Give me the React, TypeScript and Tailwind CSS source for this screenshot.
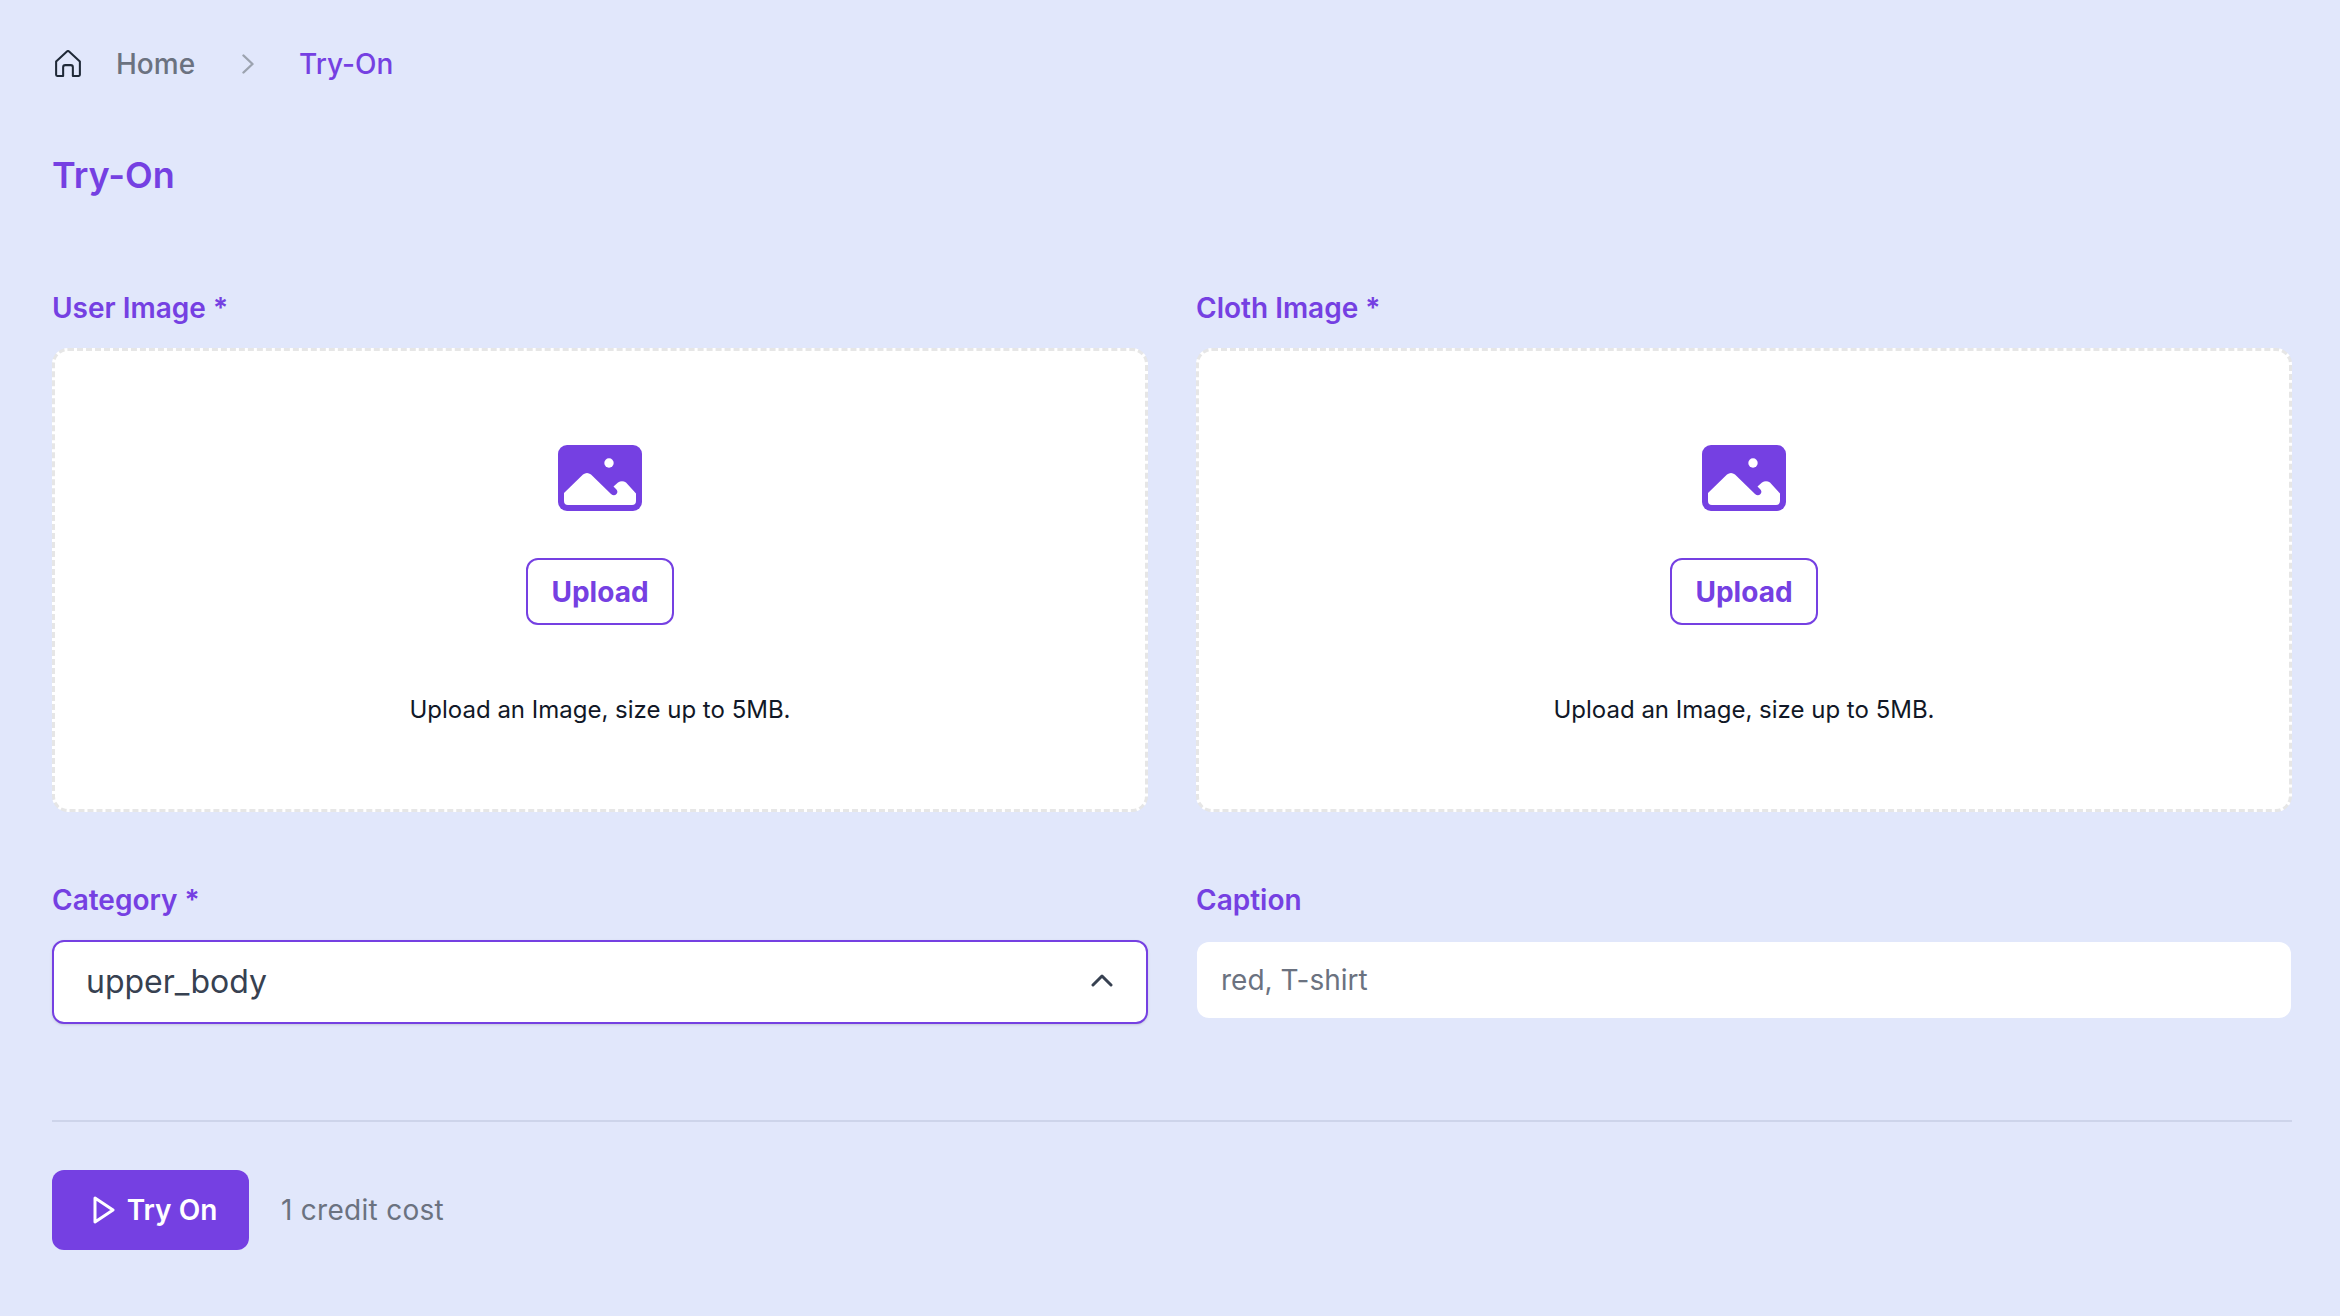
const labelClass = "text-[28px] leading-[40px] font-semibold text-[#7540e2]";

function HomeIcon() {
  return (
    <svg viewBox="0 0 24 25" className="w-[26px] h-[27px] text-[#1f2937]" fill="none" stroke="currentColor" strokeWidth="1.9" strokeLinejoin="round" strokeLinecap="round">
      <path d="M1 10.6 11 1.4a1.5 1.5 0 0 1 2 0l10 9.2V23a1 1 0 0 1-1 1h-5.5v-8a2 2 0 0 0-2-2h-5a2 2 0 0 0-2 2v8H2a1 1 0 0 1-1-1Z" />
    </svg>
  );
}

function ImageIcon() {
  return (
    <svg viewBox="0 0 84 66" className="w-[84px] h-[66px]">
      <rect width="84" height="66" rx="9" fill="#7540e2" />
      <circle cx="51" cy="18" r="4.7" fill="#fff" />
      <path
        d="M6 48 25 29.5Q29 26.5 33 29.5L53 49Q56 51.5 58.5 49 60.5 46.5 58 44L55.5 41.5 60 37.5Q64 35 68 37.5L78 48.5V56Q78 60 74 60H10Q6 60 6 56Z"
        fill="#fff"
      />
    </svg>
  );
}

function UploadBox({ label }: { label: string }) {
  return (
    <div className="flex flex-col">
      <label className={labelClass}>{label}</label>
      <div className="mt-[20px] h-[464px] flex flex-col items-center bg-white rounded-[16px] border-[3px] border-dashed border-[#e6e6e6]">
        <div className="mt-[94px]">
          <ImageIcon />
        </div>
        <button type="button" className="mt-[47px] w-[148px] h-[67px] rounded-[12px] border-2 border-[#7540e2] bg-white text-[#7540e2] text-[28px] font-bold">
          Upload
        </button>
        <p className="mt-[67px] text-[24px] leading-[36px] text-[#111827]">Upload an Image, size up to 5MB.</p>
      </div>
    </div>
  );
}

export default function App() {
  return (
    <div className="min-h-[1316px] bg-[#e1e7fb] pl-[52px] pr-[48px] font-['Inter',sans-serif]">
      {/* Breadcrumb */}
      <nav className="h-[126px] pt-[1px] flex items-center text-[28px] font-medium">
        <span className="ml-[3px]"><HomeIcon /></span>
        <span className="ml-[35px] text-[#6b7280]">Home</span>
        <svg viewBox="0 0 12 20" className="ml-[47px] w-[12px] h-[20px] text-[#9ca3af]" fill="none" stroke="currentColor" strokeWidth="2.4" strokeLinecap="round" strokeLinejoin="round">
          <path d="M1.5 1.5 10.5 10 1.5 18.5" />
        </svg>
        <span className="ml-[45px] text-[#7540e2]">Try-On</span>
      </nav>

      <h1 className="h-[99px] text-[36px] leading-[98px] font-semibold text-[#7540e2]">Try-On</h1>

      <div className="mt-[63px] grid grid-cols-2 gap-x-[48px]">
        <UploadBox label="User Image *" />
        <UploadBox label="Cloth Image *" />
      </div>

      <div className="mt-[68px] grid grid-cols-2 gap-x-[48px]">
        <div className="flex flex-col">
          <label className={labelClass}>Category *</label>
          <div className="mt-[20px] h-[84px] px-[32px] flex items-center justify-between bg-white rounded-[12px] border-2 border-[#7540e2] shadow-sm text-[32px] text-[#374151]">
            <span>upper_body</span>
            <svg viewBox="0 0 22 13" className="w-[22px] h-[13px] mr-[1px] mb-[4px] text-[#374151]" fill="none" stroke="currentColor" strokeWidth="3" strokeLinecap="round" strokeLinejoin="round">
              <path d="M2 11 11 2l9 9" />
            </svg>
          </div>
        </div>
        <div className="flex flex-col">
          <label className={labelClass}>Caption</label>
          <div className="mt-[22px] mx-px h-[76px] px-[24px] flex items-center bg-white rounded-[12px] text-[28px] text-[#6b7280]">
            red, T-shirt
          </div>
        </div>
      </div>

      <div className="mt-[96px] border-t-2 border-[#cdd4ea]" />

      <div className="mt-[48px] flex items-center">
        <button type="button" className="w-[197px] h-[80px] pl-[9px] flex items-center justify-center gap-[12px] rounded-[12px] bg-[#7540e2] text-white text-[28px] font-semibold">
          <svg viewBox="0 0 22 28" className="w-[22px] h-[28px]" fill="none" stroke="currentColor" strokeWidth="3" strokeLinejoin="round" strokeLinecap="round">
            <path d="M2 2 20 14 2 26Z" />
          </svg>
          Try On
        </button>
        <span className="ml-[32px] text-[28px] tracking-[0.01em] text-[#6b7280]">1 credit cost</span>
      </div>
    </div>
  );
}
